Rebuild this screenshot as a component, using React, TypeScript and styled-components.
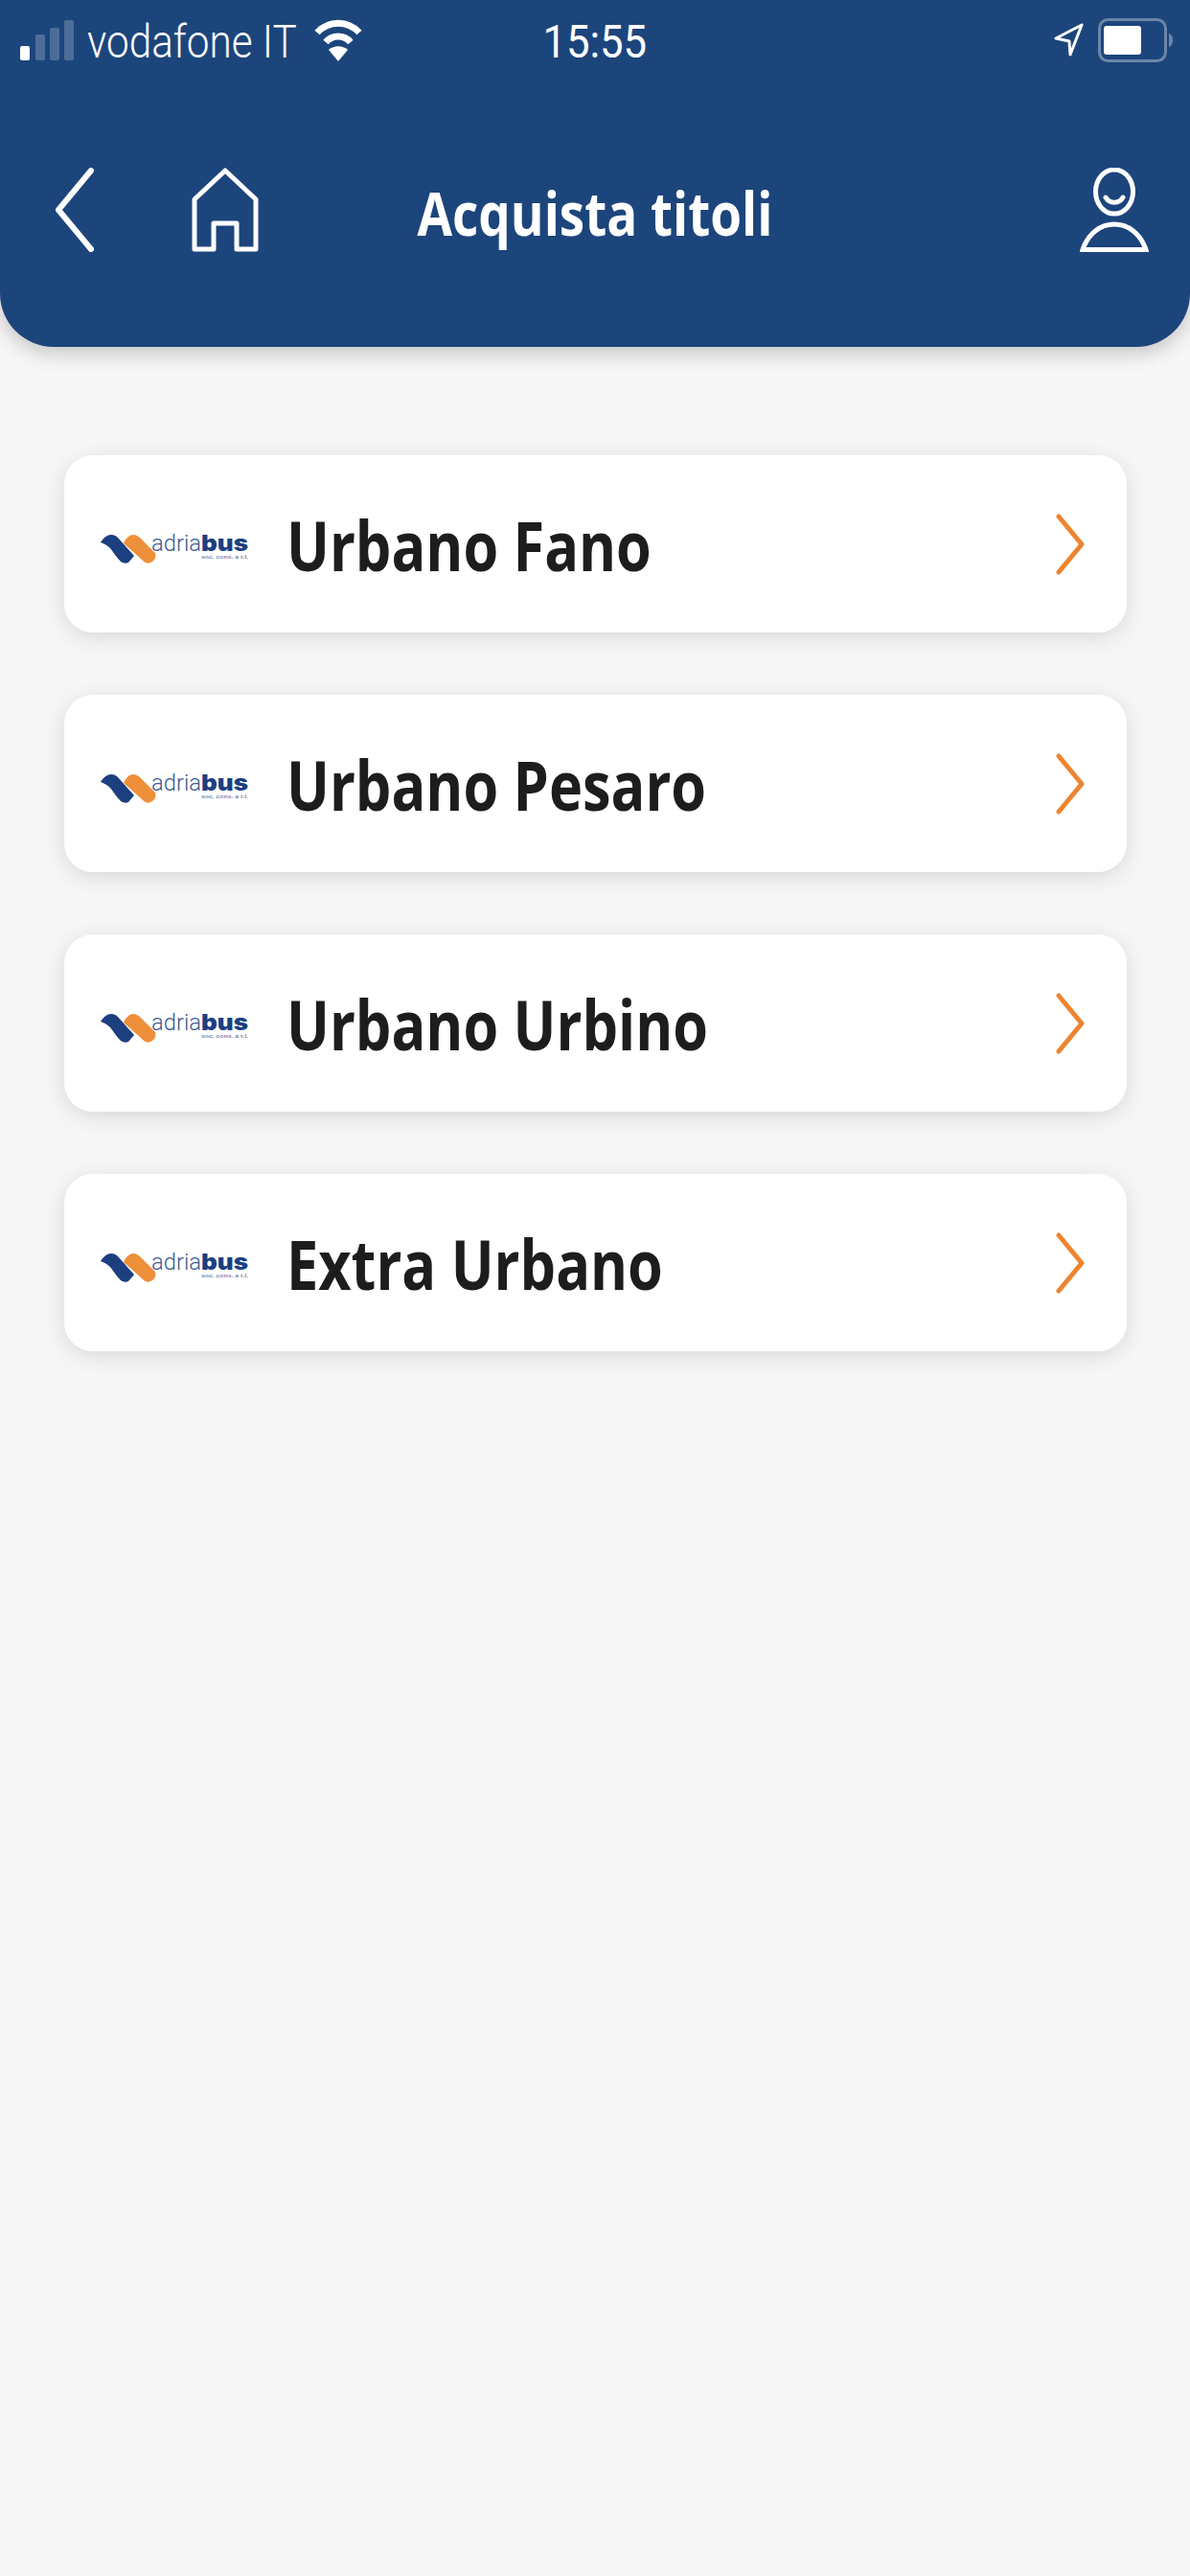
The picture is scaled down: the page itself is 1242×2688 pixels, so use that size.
import React from "react";
import styled, { createGlobalStyle } from "styled-components";

const Global = createGlobalStyle`
  html, body { margin: 0; padding: 0; background: #f7f7f7; }
  #root { min-height: 2688px; }
`;

const Page = styled.div`
  width: 1242px;
  height: 2688px;
  background: #f7f7f7;
  overflow: hidden;
`;

const Header = styled.header`
  height: 362px;
  box-sizing: border-box;
  background: #1c457c;
  border-radius: 0 0 56px 56px;
  box-shadow: 0 6px 22px rgba(0, 0, 0, 0.22);
  color: #fff;
  padding-top: 16px;
`;

const StatusBar = styled.div`
  display: grid;
  grid-template-columns: 1fr auto 1fr;
  align-items: center;
  height: 46px;
  padding: 0 18px 0 21px;
`;

const StatusLeft = styled.div`
  display: flex;
  align-items: center;
`;

const StatusRight = styled.div`
  display: flex;
  align-items: center;
  justify-content: flex-end;
  gap: 15px;
`;

const Carrier = styled.span`
  font: 300 48px/46px Roboto, sans-serif;
  margin: 5px 0 0 14px;
  width: 219px;
  white-space: nowrap;
  display: inline-block;
  transform: scaleX(0.88);
  transform-origin: left center;
`;

const Clock = styled.span`
  font: 400 48px/46px Roboto, sans-serif;
  margin: 5px 4px 0 0;
  display: inline-block;
  transform: scaleX(0.91);
`;

const WifiIcon = styled.svg`
  width: 50px;
  height: 44px;
  margin-left: 18px;
`;

const Nav = styled.nav`
  display: grid;
  grid-template-columns: 1fr auto 1fr;
  align-items: center;
  height: 88px;
  margin-top: 113px;
  padding: 0 43px 0 58px;
`;

const NavLeft = styled.div`
  display: flex;
  align-items: center;
  gap: 102px;
`;

const NavRight = styled.div`
  display: flex;
  justify-content: flex-end;
`;

const Title = styled.h1`
  margin: 6px 16px 0 0;
  font: 700 62px/82px "Open Sans", sans-serif;
  display: inline-block;
  white-space: nowrap;
  transform: scaleX(0.855);
`;

const List = styled.main`
  display: flex;
  flex-direction: column;
  gap: 65px;
  padding: 113px 66px 0 67px;
`;

const Card = styled.div`
  display: flex;
  align-items: center;
  height: 185px;
  background: #fff;
  border-radius: 30px;
  box-shadow: 0 5px 24px rgba(0, 0, 0, 0.13);
  padding: 0 44px 0 38px;
`;

const Logo = styled.svg`
  width: 154px;
  height: 30px;
  flex: none;
  overflow: visible;
  margin-top: 10px;
`;

const Label = styled.span`
  flex: 1;
  margin-left: 40px;
  font: 700 72px/90px "Open Sans", sans-serif;
  color: #1d1d1d;
  white-space: nowrap;
  transform: scaleX(0.825);
  transform-origin: left center;
`;

const Chevron = styled.svg`
  width: 30px;
  height: 64px;
  flex: none;
`;

const AdriaLogo = () => (
  <Logo viewBox="0 0 154 30">
    <path d="M0 8 C3 3 7 0 11 0 C14 0 16 1 18 3 L35 22 L29 29 C27 30 24 30 21 28 C17 24 13 18 10 14 C7 11 3 9 0 8 Z" fill="#1c3f7f" />
    <path d="M24 9 C26 4 30 0 34 0 C37 0 40 2 42 4 L57 19 C58 23 57 27 52 29 C48 31 45 28 42 25 C36 20 30 14 24 9 Z" fill="#ee8f3a" />
    <text x="53" y="17" fontFamily="Roboto, sans-serif" fontSize="23" fontWeight="300" fill="#3c5a90" textLength="52" lengthAdjust="spacingAndGlyphs">adria</text>
    <text x="105" y="17" fontFamily="Inter, sans-serif" fontSize="23" fontWeight="900" fill="#1c3f7f" textLength="49" lengthAdjust="spacingAndGlyphs">bus</text>
    <text x="105" y="25" fontFamily="'Liberation Sans', sans-serif" fontSize="6" fontWeight="700" fill="#7a8aa8" textLength="49" lengthAdjust="spacingAndGlyphs">soc. cons. a r.l.</text>
  </Logo>
);

const rows = ["Urbano Fano", "Urbano Pesaro", "Urbano Urbino", "Extra Urbano"];

export default function App() {
  return (
    <Page>
      <Global />
      <Header>
        <StatusBar>
          <StatusLeft>
            <svg width="56" height="42" viewBox="0 0 56 42">
              <rect x="0" y="27" width="10" height="15" rx="2" fill="#fff" />
              <rect x="16" y="15" width="10" height="27" rx="2" fill="#fff" opacity="0.22" />
              <rect x="31" y="8" width="10" height="34" rx="2" fill="#fff" opacity="0.22" />
              <rect x="46" y="0" width="10" height="42" rx="2" fill="#fff" opacity="0.22" />
            </svg>
            <Carrier>vodafone IT</Carrier>
            <WifiIcon viewBox="0 0 50 44" fill="none" stroke="#fff" strokeWidth="7">
              <path d="M3 14 C15 1 35 1 47 14" />
              <path d="M12 24 C19 16 31 16 38 24" />
              <path d="M25 44 L15 32 C21 27 29 27 35 32 Z" fill="#fff" stroke="none" />
            </WifiIcon>
          </StatusLeft>
          <Clock>15:55</Clock>
          <StatusRight>
            <svg width="31" height="35" viewBox="0 0 31 35" fill="none" stroke="#fff" strokeWidth="3" strokeLinejoin="round">
              <path d="M29 2 L2 16 L16 19 L17 33 Z" />
            </svg>
            <svg width="78" height="46" viewBox="0 0 78 46">
              <rect x="1.5" y="1.5" width="69" height="43" rx="9" fill="none" stroke="#fff" strokeOpacity="0.35" strokeWidth="3" />
              <rect x="6" y="8" width="39" height="30" rx="3" fill="#fff" />
              <path d="M74 16 C77 17 78 20 78 23 C78 26 77 29 74 30 Z" fill="#fff" opacity="0.35" />
            </svg>
          </StatusRight>
        </StatusBar>
        <Nav>
          <NavLeft>
            <svg width="40" height="88" viewBox="0 0 40 88" fill="none" stroke="#fff" strokeWidth="6" strokeLinecap="round" strokeLinejoin="round">
              <path d="M37 3 L3 44 L37 85" />
            </svg>
            <svg width="70" height="88" viewBox="0 0 70 88" fill="none" stroke="#fff" strokeWidth="5" strokeLinejoin="round">
              <path d="M35 3 L3 33 V85 H23 V58 H47 V85 H67 V33 Z" />
            </svg>
          </NavLeft>
          <Title>Acquista titoli</Title>
          <NavRight>
            <svg width="72" height="88" viewBox="0 0 72 88" fill="none" stroke="#fff" strokeWidth="5">
              <ellipse cx="36" cy="25" rx="19.5" ry="23" />
              <path d="M27 31 C31 38 41 38 45 31" strokeLinecap="round" />
              <path d="M3 85.5 C9 68 22 59 36 59 C50 59 63 68 69 85.5 Z" />
            </svg>
          </NavRight>
        </Nav>
      </Header>
      <List>
        {rows.map((r) => (
          <Card key={r}>
            <AdriaLogo />
            <Label>{r}</Label>
            <Chevron viewBox="0 0 30 64" fill="none" stroke="#ee8430" strokeWidth="5" strokeLinecap="round" strokeLinejoin="round">
              <path d="M3 3 L27 32 L3 61" />
            </Chevron>
          </Card>
        ))}
      </List>
    </Page>
  );
}
